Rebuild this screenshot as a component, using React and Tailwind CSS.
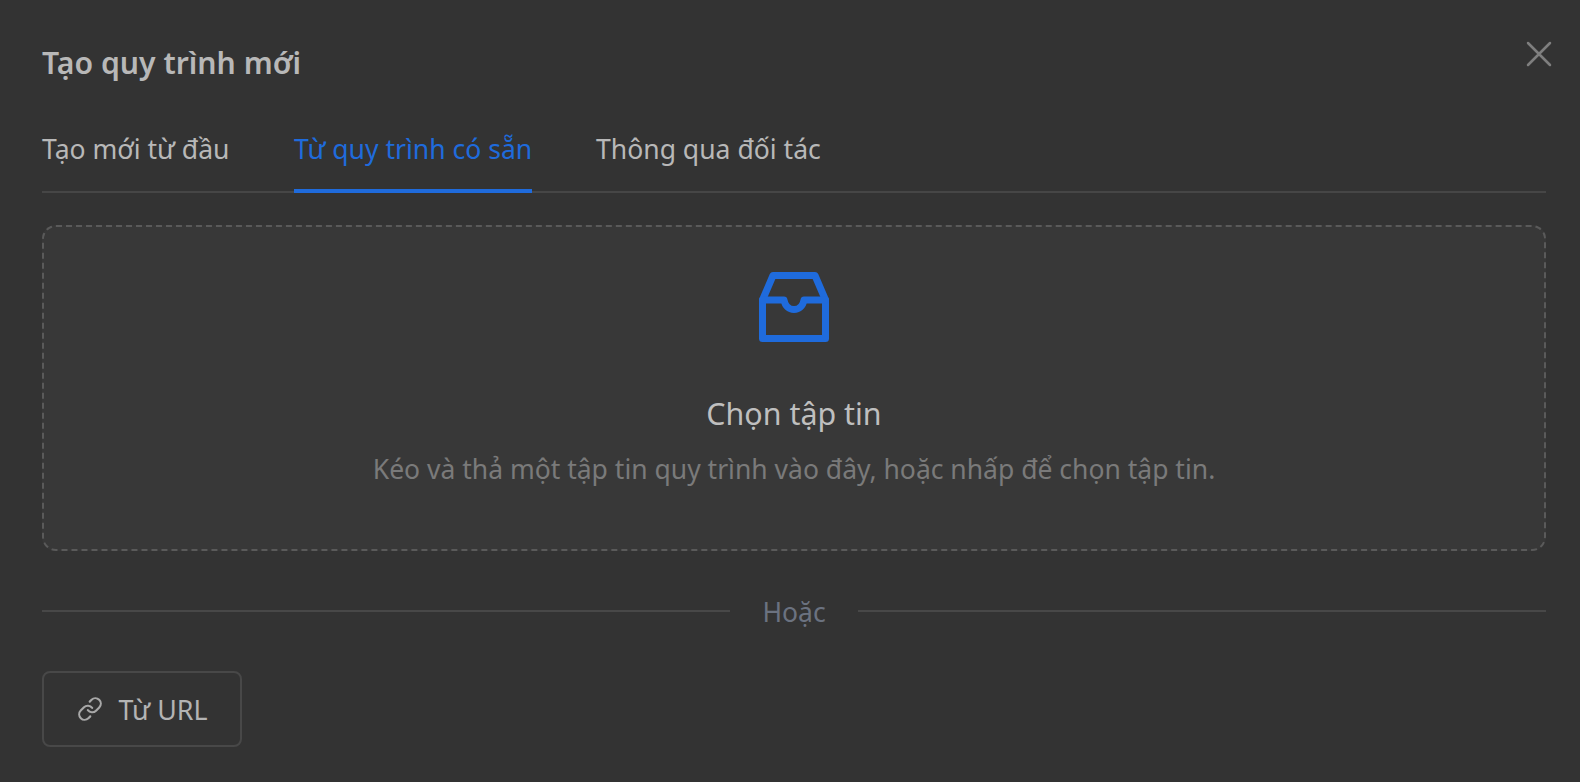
import React from "react";

function InboxIcon() {
  return (
    <svg width="72" height="72" viewBox="0 0 72 72" fill="none" stroke="#1f6bdc" strokeWidth="7" strokeLinejoin="round" strokeLinecap="round">
      <path d="M4.5 29 L4.5 67.5 L67.5 67.5 L67.5 29 L57 4.5 L15 4.5 Z" />
      <path d="M4.5 29 L26 29 C27 35 31 38.5 36 38.5 C41 38.5 45 35 46 29 L67.5 29" />
    </svg>
  );
}

function LinkIcon() {
  return (
    <svg width="26" height="26" viewBox="0 0 24 24" fill="none" stroke="#a8a8a8" strokeWidth="2" strokeLinecap="round" strokeLinejoin="round">
      <path d="M10 13a5 5 0 0 0 7.54.54l3-3a5 5 0 0 0-7.07-7.07l-1.72 1.71" />
      <path d="M14 11a5 5 0 0 0-7.54-.54l-3 3a5 5 0 0 0 7.07 7.07l1.71-1.71" />
    </svg>
  );
}

export default function App() {
  return (
    <div className="relative h-[782px] w-[1580px] overflow-hidden bg-[#333333] pl-[42px] pr-[34px] pt-[41px] font-['Noto_Sans',sans-serif]">
      <button className="absolute right-[28px] top-[41px] text-[#7f7f7f]">
        <svg width="26" height="26" viewBox="0 0 26 26" fill="none" stroke="currentColor" strokeWidth="2.5" strokeLinecap="round">
          <path d="M2 2 L24 24 M24 2 L2 24" />
        </svg>
      </button>

      <h1 className="h-[44px] text-[30.2px] font-semibold leading-[44px] text-[#b8b8b8]">Tạo quy trình mới</h1>

      <div className="mt-[33px] flex h-[75px] gap-[64px] border-b-2 border-[#464646]">
        <div className="h-[75px] w-[188px] whitespace-nowrap pt-[11px] text-[26.55px] leading-[40px] text-[#b8b8b8]">Tạo mới từ đầu</div>
        <div className="h-[75px] w-[238px] whitespace-nowrap border-b-4 border-[#1f6bdc] pt-[11px] text-[26.55px] leading-[40px] text-[#1f6bdc]">Từ quy trình có sẵn</div>
        <div className="h-[75px] w-[225px] whitespace-nowrap pt-[11px] text-[26.55px] leading-[40px] text-[#b8b8b8]">Thông qua đối tác</div>
      </div>

      <div className="mt-[32px] flex h-[326px] flex-col items-center rounded-[14px] border-2 border-dashed border-[#5a5a5a] bg-[#383838] pt-[44px]">
        <InboxIcon />
        <div className="mt-[49px] text-[30.4px] leading-[44px] text-[#bfbfbf]">Chọn tập tin</div>
        <div className="mt-[15px] text-[26.5px] leading-[36px] text-[#7a7a7a]">Kéo và thả một tập tin quy trình vào đây, hoặc nhấp để chọn tập tin.</div>
      </div>

      <div className="mt-[40px] flex h-[40px] items-center gap-[32px]">
        <div className="h-[2px] flex-1 bg-[#484848]" />
        <span className="pt-[2px] text-[26.5px] leading-[40px] text-[#6b7280]">Hoặc</span>
        <div className="h-[2px] flex-1 bg-[#484848]" />
      </div>

      <button className="mt-[40px] flex h-[76px] w-[200px] items-center justify-center gap-[16px] rounded-[8px] border-2 border-[#484848] text-[26.8px] text-[#b4b4b4]">
        <LinkIcon />
        <span className="pt-[3px]">Từ URL</span>
      </button>
    </div>
  );
}
